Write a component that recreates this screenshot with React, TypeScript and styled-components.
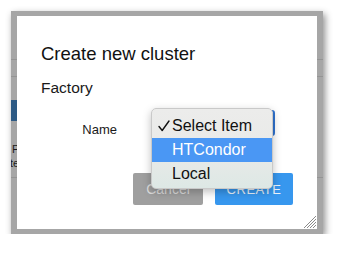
import React from "react";
import styled, { createGlobalStyle } from "styled-components";

const Global = createGlobalStyle`
  html, body { margin: 0; padding: 0; background: #ffffff; }
  body { font-family: "Liberation Sans", Arial, Helvetica, sans-serif; }
`;

const Frame = styled.div`
  margin: 11px 0 0 11px;
  width: 312px;
  height: 223px;
  background: #a6a6a6;
  box-shadow: 2px 3px 7px rgba(0, 0, 0, 0.45);
  display: grid;
  overflow: hidden;
`;

const PageBehind = styled.div`
  grid-area: 1 / 1;
  display: flex;
  flex-direction: column;
  padding-top: 48px;
`;

const Rule = styled.div<{ $gap: number }>`
  height: 1px;
  background: #949494;
  margin-bottom: ${(p) => p.$gap}px;
`;

const BlueBar = styled.div`
  height: 21px;
  width: 40px;
  background: #2d5a84;
  margin-bottom: 22px;
`;

const BehindText = styled.div`
  display: flex;
  flex-direction: column;
  gap: 1px;
  font-size: 11px;
  line-height: 12.5px;
  color: #1a1a1a;
  padding-left: 1px;
  margin-bottom: 8px;
  white-space: nowrap;
`;

const BehindLine = styled.span<{ $shift: number }>`
  display: block;
  margin-left: ${(p) => p.$shift}px;
`;

const Modal = styled.div`
  grid-area: 1 / 1;
  margin: 5px 6px 5px 6px;
  background: #ffffff;
  position: relative;
  display: flex;
  flex-direction: column;
  padding: 27px 24px 24px 24px;
  box-sizing: border-box;
`;

const Title = styled.h2`
  margin: 0;
  font-size: 18.5px;
  line-height: 22px;
  font-weight: 400;
  color: #111;
`;

const Section = styled.div`
  margin-top: 14px;
  font-size: 15.5px;
  line-height: 18px;
  color: #1a1a1a;
`;

const FieldRow = styled.div`
  margin-top: 13px;
  display: flex;
  align-items: flex-start;
  height: 26px;
`;

const Label = styled.div`
  width: 76px;
  text-align: right;
  padding-top: 12px;
  font-size: 13px;
  line-height: 16px;
  color: #1a1a1a;
`;

const SelectBox = styled.div`
  margin-left: 37px;
  width: 121px;
  height: 26px;
  box-sizing: border-box;
  border: 2px solid #2f73d0;
  border-radius: 3px;
  background: #fff;
`;

const Actions = styled.div`
  margin-top: auto;
  display: flex;
  justify-content: flex-end;
  gap: 12px;
`;

const Button = styled.button<{ $primary?: boolean; $w: number }>`
  width: ${(p) => p.$w}px;
  height: 32px;
  border: none;
  border-radius: 2px;
  font-family: "Liberation Sans", Arial, sans-serif;
  font-size: ${(p) => (p.$primary ? 13 : 14)}px;
  letter-spacing: ${(p) => (p.$primary ? "0.5px" : "0")};
  font-weight: 500;
  background: ${(p) => (p.$primary ? "#3797ee" : "#9f9f9f")};
  color: ${(p) => (p.$primary ? "#eaf3fc" : "#dcdcdc")};
  padding: 0;
`;

const Menu = styled.div`
  position: absolute;
  left: 134px;
  top: 92px;
  width: 122px;
  height: 81px;
  box-sizing: border-box;
  padding-top: 5px;
  border-radius: 5px;
  border: 1px solid #c9c9c9;
  background: linear-gradient(180deg, #ececeb 0%, #e9eae8 55%, #dde8e5 100%);
  box-shadow: 0 3px 8px rgba(0, 0, 0, 0.25);
  overflow: hidden;
`;

const Item = styled.div<{ $active?: boolean }>`
  position: relative;
  height: 24px;
  padding-left: 20px;
  font-size: 16px;
  line-height: 24px;
  color: ${(p) => (p.$active ? "#ffffff" : "#111")};
  background: ${(p) => (p.$active ? "#4a97f4" : "transparent")};
`;

const Check = styled.svg`
  position: absolute;
  left: 6px;
  top: 6px;
`;

const Grip = styled.svg`
  position: absolute;
  right: 1px;
  bottom: 1px;
`;

export default function App() {
  return (
    <>
      <Global />
      <Frame>
        <PageBehind>
          <Rule $gap={16} />
          <Rule $gap={23} />
          <BlueBar />
          <BehindText>
            <BehindLine $shift={0}>P</BehindLine>
            <BehindLine $shift={-2}>te</BehindLine>
          </BehindText>
          <Rule $gap={0} />
        </PageBehind>
        <Modal>
          <Title>Create new cluster</Title>
          <Section>Factory</Section>
          <FieldRow>
            <Label>Name</Label>
            <SelectBox />
          </FieldRow>
          <Actions>
            <Button $w={70}>Cancel</Button>
            <Button $primary $w={78}>CREATE</Button>
          </Actions>
          <Menu>
            <Item>
              <Check width="12" height="12" viewBox="0 0 12 12">
                <path d="M1 6.5 L4.2 10.5 L11 1" fill="none" stroke="#111" strokeWidth="1.4" strokeLinecap="round" strokeLinejoin="round" />
              </Check>
              Select Item
            </Item>
            <Item $active>HTCondor</Item>
            <Item>Local</Item>
          </Menu>
          <Grip width="13" height="13" viewBox="0 0 13 13">
            <g stroke="#8a8a8a" strokeWidth="1">
              <line x1="1" y1="13" x2="13" y2="1" />
              <line x1="4" y1="13" x2="13" y2="4" />
              <line x1="7" y1="13" x2="13" y2="7" />
              <line x1="10" y1="13" x2="13" y2="10" />
            </g>
          </Grip>
        </Modal>
      </Frame>
    </>
  );
}
